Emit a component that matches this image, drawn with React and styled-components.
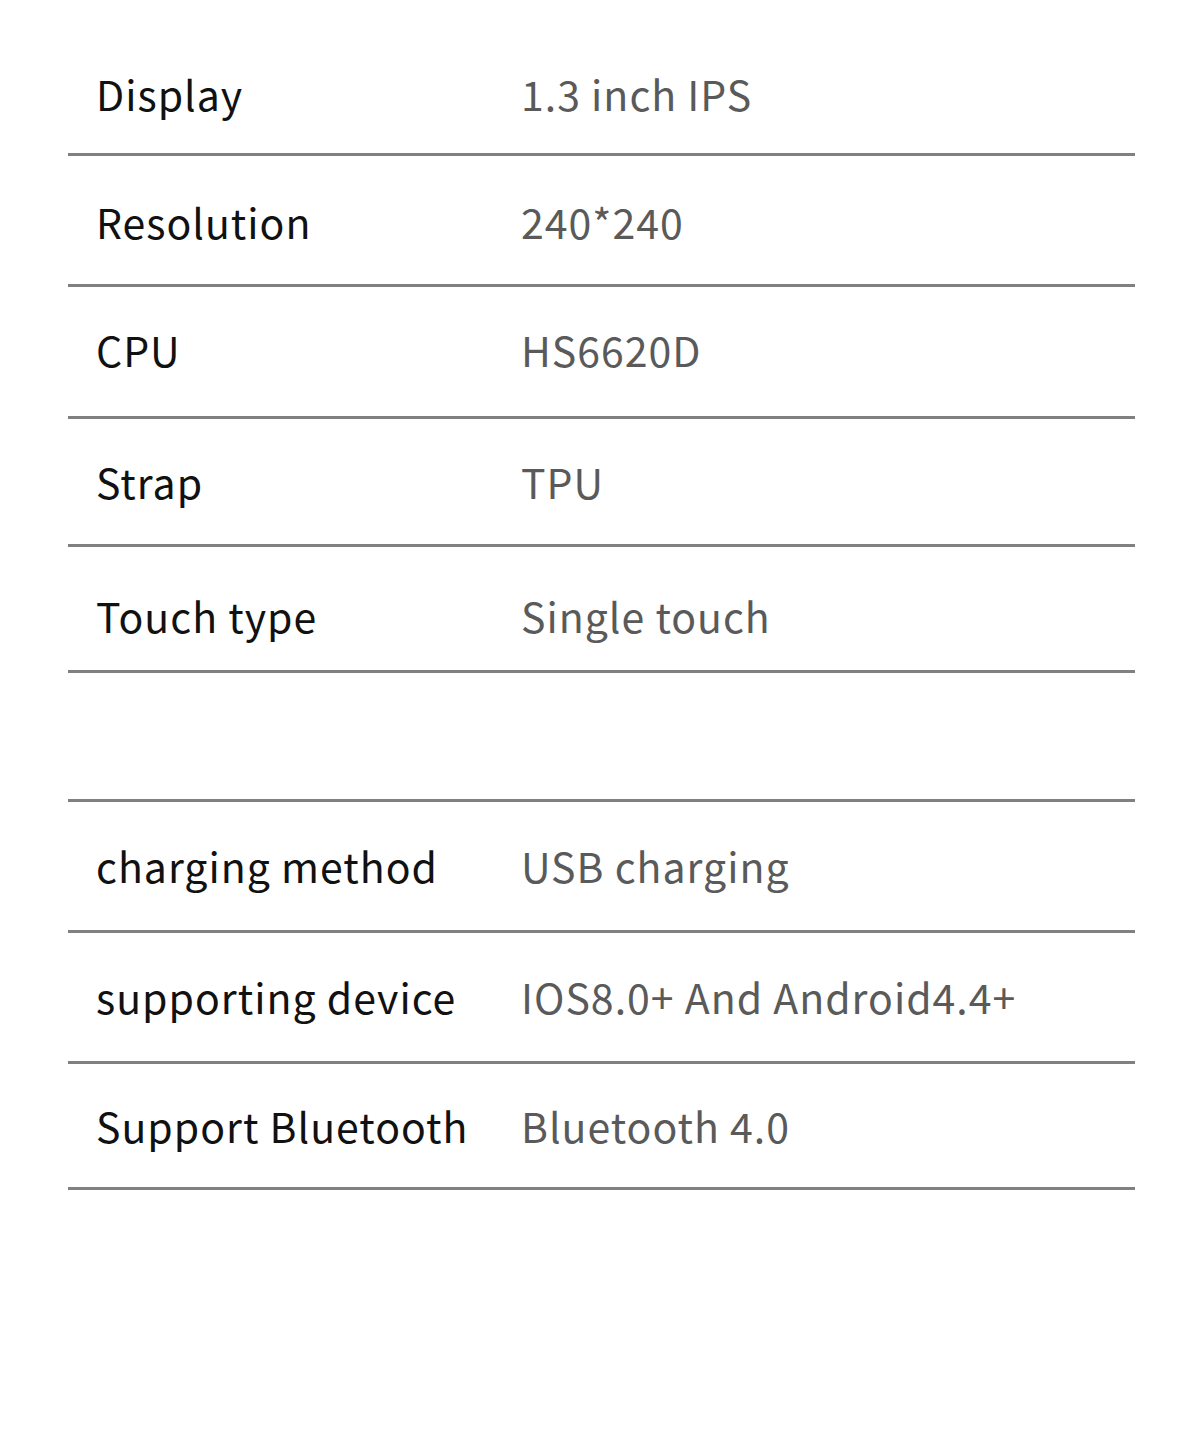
import React from 'react'
import styled, { createGlobalStyle } from 'styled-components'

const Global = createGlobalStyle`
  body {
    margin: 0;
    background: #fff;
    font-family: "Noto Sans CJK SC", "Noto Sans", sans-serif;
  }
`

const Page = styled.div`
  width: 1200px;
  height: 1443px;
  background: #fff;
  padding: 26px 65px 0 68px;
  box-sizing: border-box;
`

const Row = styled.div`
  display: flex;
  align-items: center;
  height: ${p => p.$h || 130}px;
  padding-top: ${p => p.$pt || 0}px;
  padding-bottom: ${p => p.$pb || 0}px;
  box-sizing: border-box;
  border-bottom: 3px solid #808080;
`

const Label = styled.div`
  width: 453px;
  padding-left: 28px;
  box-sizing: border-box;
  font-size: 41px;
  letter-spacing: 1px;
  color: #111;
  white-space: nowrap;
`

const Value = styled.div`
  font-size: 41px;
  letter-spacing: 1px;
  color: #5a5a5a;
  white-space: nowrap;
`

// label, value, row height, top pad, bottom pad
const rows = [
  ['Display', '1.3 inch IPS', 130, 6, 0],
  ['Resolution', '240*240', 131, 2, 0],
  ['CPU', 'HS6620D', 132, 0, 5],
  ['Strap', 'TPU', 128, 0, 1],
  ['Touch type', 'Single touch', 126, 13, 0],
  [null, null, 129, 0, 0],
  ['charging method', 'USB charging', 131, 0, 2],
  ['supporting device', 'IOS8.0+ And Android4.4+', 131, 0, 2],
  ['Support Bluetooth', 'Bluetooth 4.0', 126, 0, 2],
]

export default function App() {
  return (
    <>
      <Global />
      <Page>
        {rows.map(([label, value, h, pt, pb], i) => (
          <Row key={i} $h={h} $pt={pt} $pb={pb}>
            {label && <Label>{label}</Label>}
            {value && <Value>{value}</Value>}
          </Row>
        ))}
      </Page>
    </>
  )
}
